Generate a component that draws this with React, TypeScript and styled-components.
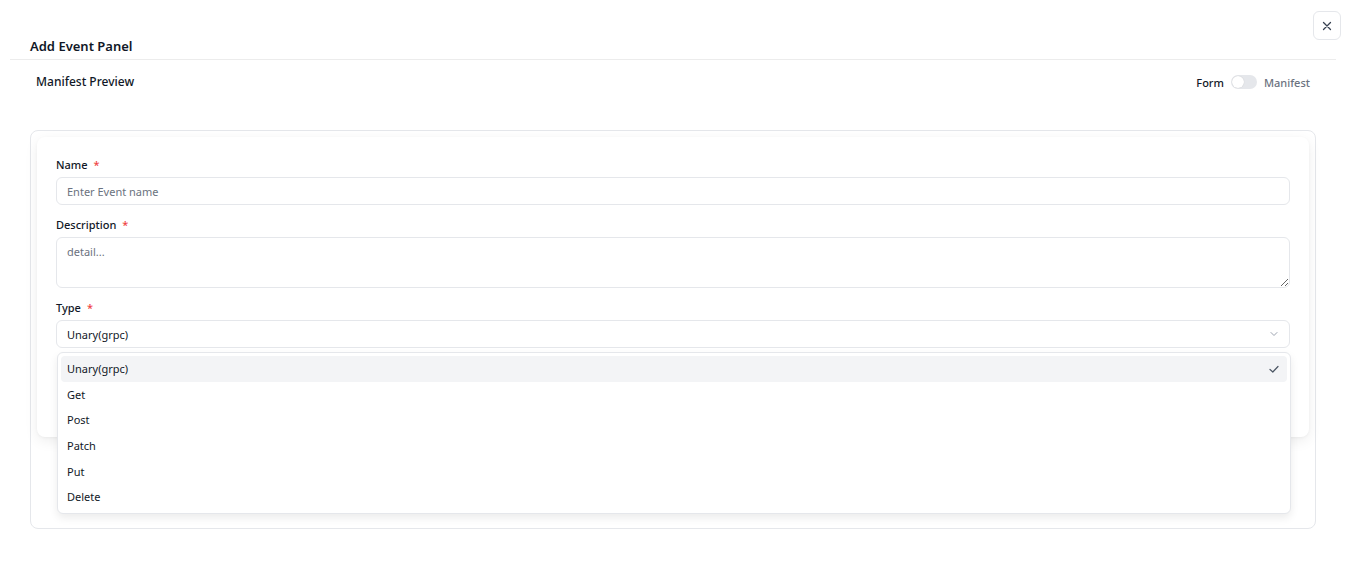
import React from "react";
import styled, { createGlobalStyle } from "styled-components";

const GlobalStyle = createGlobalStyle`
  html, body { margin: 0; padding: 0; background: #ffffff; }
  body { font-family: "Noto Sans", "Open Sans", sans-serif; color: #111827; }
  * { box-sizing: border-box; }
`;

const Page = styled.div`
  position: relative;
  width: 1348px;
  height: 565px;
  padding: 0 12px 0 10px;
`;

const CloseButton = styled.button`
  position: absolute;
  top: 11px;
  right: 7px;
  width: 28px;
  height: 29px;
  border: 1px solid #e5e7eb;
  border-radius: 6px;
  background: #fff;
  display: flex;
  align-items: center;
  justify-content: center;
  padding: 0;
  color: #374151;
`;

const Header = styled.div`
  padding: 37px 20px 4px;
  border-bottom: 1px solid #ececec;
`;

const Title = styled.h2`
  margin: 0;
  font-size: 13px;
  line-height: 18px;
  font-weight: 600;
  color: #111827;
`;

const SubBar = styled.div`
  display: flex;
  align-items: center;
  justify-content: space-between;
  padding: 0 26px;
  height: 44px;
`;

const SubTitle = styled.div`
  font-size: 12px;
  font-weight: 500;
  line-height: 18px;
  color: #111827;
`;

const ToggleGroup = styled.div`
  display: flex;
  align-items: center;
  gap: 7px;
  font-size: 11px;
`;

const ToggleLabel = styled.span<{ $muted?: boolean }>`
  color: ${(p) => (p.$muted ? "#6b7280" : "#111827")};
  font-weight: 500;
`;

const Switch = styled.span`
  position: relative;
  width: 26px;
  height: 14px;
  border-radius: 7px;
  background: #e5e7eb;
  display: inline-block;
  &::after {
    content: "";
    position: absolute;
    left: 1px;
    top: 1px;
    width: 12px;
    height: 12px;
    border-radius: 50%;
    background: #fff;
    box-shadow: 0 0 1px rgba(0, 0, 0, 0.2);
  }
`;

const OuterCard = styled.div`
  margin: 26px 20px 0;
  border: 1px solid #e5e7eb;
  border-radius: 8px;
  padding: 6px 6px 91px;
`;

const InnerCard = styled.div`
  background: #fff;
  border-radius: 8px;
  box-shadow: 0 4px 14px rgba(0, 0, 0, 0.07), 0 1px 3px rgba(0, 0, 0, 0.04);
  padding: 21px 19px 89px;
  display: flex;
  flex-direction: column;
  gap: 13px;
`;

const Field = styled.div`
  display: flex;
  flex-direction: column;
  gap: 5px;
  position: relative;
`;

const Label = styled.label`
  font-size: 11px;
  line-height: 14px;
  font-weight: 500;
  color: #111827;
  display: flex;
  gap: 6px;
`;

const Required = styled.span`
  color: #ef4444;
`;

const Input = styled.input`
  height: 28px;
  border: 1px solid #e5e7eb;
  border-radius: 6px;
  padding: 0 10px;
  font-family: inherit;
  font-size: 11px;
  color: #111827;
  outline: none;
  &::placeholder { color: #6b7280; }
`;

const TextArea = styled.textarea`
  height: 51px;
  border: 1px solid #e5e7eb;
  border-radius: 6px;
  padding: 6px 10px;
  font-family: inherit;
  font-size: 11px;
  color: #111827;
  outline: none;
  resize: vertical;
  display: block;
  &::placeholder { color: #6b7280; }
`;

const SelectBox = styled.div`
  height: 28px;
  border: 1px solid #e5e7eb;
  border-radius: 6px;
  padding: 0 10px;
  display: flex;
  align-items: center;
  justify-content: space-between;
  font-size: 11px;
  color: #111827;
`;

const Menu = styled.div`
  position: absolute;
  left: 1px;
  right: -1px;
  top: calc(100% + 4px);
  background: #fff;
  border: 1px solid #e5e7eb;
  border-radius: 6px;
  box-shadow: 0 4px 8px rgba(0, 0, 0, 0.08);
  padding: 3px;
  z-index: 10;
`;

const MenuItem = styled.div<{ $active?: boolean }>`
  height: 25.6px;
  display: flex;
  align-items: center;
  justify-content: space-between;
  padding: 0 7px 0 6px;
  border-radius: 4px;
  font-size: 11px;
  color: #111827;
  background: ${(p) => (p.$active ? "#f3f4f6" : "transparent")};
`;

const options = ["Unary(grpc)", "Get", "Post", "Patch", "Put", "Delete"];

export default function App() {
  return (
    <>
      <GlobalStyle />
      <Page>
        <CloseButton aria-label="close">
          <svg width="10" height="10" viewBox="0 0 10 10" fill="none" stroke="#374151" strokeWidth="1.3" strokeLinecap="round">
            <path d="M1.5 1.5 L8.5 8.5 M8.5 1.5 L1.5 8.5" />
          </svg>
        </CloseButton>
        <Header>
          <Title>Add Event Panel</Title>
        </Header>
        <SubBar>
          <SubTitle>Manifest Preview</SubTitle>
          <ToggleGroup>
            <ToggleLabel>Form</ToggleLabel>
            <Switch />
            <ToggleLabel $muted>Manifest</ToggleLabel>
          </ToggleGroup>
        </SubBar>
        <OuterCard>
          <InnerCard>
            <Field>
              <Label>
                Name <Required>*</Required>
              </Label>
              <Input placeholder="Enter Event name" />
            </Field>
            <Field>
              <Label>
                Description <Required>*</Required>
              </Label>
              <TextArea placeholder="detail..." />
            </Field>
            <Field>
              <Label>
                Type <Required>*</Required>
              </Label>
              <SelectBox>
                <span>Unary(grpc)</span>
                <svg width="10" height="10" viewBox="0 0 10 10" fill="none" stroke="#9ca3af" strokeWidth="1" strokeLinecap="round" strokeLinejoin="round">
                  <path d="M2 3.5 L5 6.5 L8 3.5" />
                </svg>
              </SelectBox>
              <Menu>
                {options.map((o, i) => (
                  <MenuItem key={o} $active={i === 0}>
                    <span>{o}</span>
                    {i === 0 && (
                      <svg width="12" height="12" viewBox="0 0 12 12" fill="none" stroke="#4b5563" strokeWidth="1.2" strokeLinecap="round" strokeLinejoin="round">
                        <path d="M2 6.5 L4.8 9 L10 3.5" />
                      </svg>
                    )}
                  </MenuItem>
                ))}
              </Menu>
            </Field>
          </InnerCard>
        </OuterCard>
      </Page>
    </>
  );
}
